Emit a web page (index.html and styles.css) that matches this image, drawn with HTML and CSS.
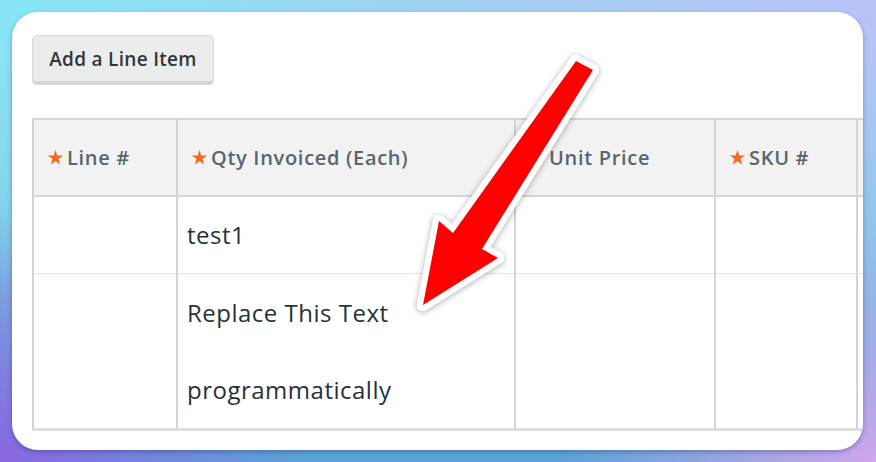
FILE: index.html
```html
<!DOCTYPE html>
<html>
<head>
<meta charset="utf-8">
<link rel="stylesheet" href="styles.css">
</head>
<body>
<div class="card">
  <button class="btn">Add a Line Item</button>
  <div class="table-wrap">
    <table class="grid">
      <colgroup>
        <col class="c1"><col class="c2"><col class="c3"><col class="c4"><col class="c5">
      </colgroup>
      <thead>
        <tr>
          <th><span class="star"><svg viewBox="0 0 24 24" width="17" height="17"><polygon points="12,1.5 14.6,9.2 22.8,9.3 16.2,14.1 18.7,21.9 12,17.2 5.3,21.9 7.8,14.1 1.2,9.3 9.4,9.2" fill="#f26a26"/></svg></span>Line #</th>
          <th><span class="star"><svg viewBox="0 0 24 24" width="17" height="17"><polygon points="12,1.5 14.6,9.2 22.8,9.3 16.2,14.1 18.7,21.9 12,17.2 5.3,21.9 7.8,14.1 1.2,9.3 9.4,9.2" fill="#f26a26"/></svg></span>Qty Invoiced (Each)</th>
          <th><span class="star"></span>Unit Price</th>
          <th><span class="star"><svg viewBox="0 0 24 24" width="17" height="17"><polygon points="12,1.5 14.6,9.2 22.8,9.3 16.2,14.1 18.7,21.9 12,17.2 5.3,21.9 7.8,14.1 1.2,9.3 9.4,9.2" fill="#f26a26"/></svg></span>SKU #</th>
          <th></th>
        </tr>
      </thead>
      <tbody>
        <tr class="r1">
          <td></td>
          <td>test1</td>
          <td></td>
          <td></td>
          <td></td>
        </tr>
        <tr class="r2">
          <td></td>
          <td><div class="line">Replace This Text</div><div class="line">programmatically</div></td>
          <td></td>
          <td></td>
          <td></td>
        </tr>
      </tbody>
    </table>
  </div>
</div>
<svg class="arrow" width="876" height="462" viewBox="0 0 876 462">
  <defs>
    <filter id="sh" x="-20%" y="-20%" width="140%" height="140%">
      <feDropShadow dx="0" dy="1" stdDeviation="3" flood-color="#000" flood-opacity="0.35"/>
    </filter>
  </defs>
  <polygon filter="url(#sh)" points="576,61 593,70 482,249 498,258 423,305 439,221 453,233" fill="#ff0000" stroke="#ffffff" stroke-width="12" stroke-linejoin="round" paint-order="stroke"/>
</svg>
</body>
</html>
```

FILE: styles.css
```css
html, body {
  margin: 0;
  padding: 0;
}
body {
  width: 876px;
  height: 462px;
  overflow: hidden;
  box-sizing: border-box;
  padding: 12px 13px 12px 12px;
  position: relative;
  background:
    radial-gradient(ellipse 420px 300px at 0% 0%, #86e6f6 0%, rgba(134,230,246,0) 100%),
    radial-gradient(ellipse 500px 300px at 100% 0%, #b9c2f7 0%, rgba(185,194,247,0) 100%),
    radial-gradient(ellipse 300px 260px at 0% 100%, #8b67e2 0%, rgba(139,103,226,0) 100%),
    radial-gradient(ellipse 320px 260px at 100% 100%, #cfa6ef 0%, rgba(207,166,239,0) 100%),
    linear-gradient(180deg, #9fd4f2 0%, #7ec8e6 50%, #5aa3d6 100%);
  font-family: "Open Sans", "Noto Sans", sans-serif;
}
.card {
  height: 100%;
  background: #ffffff;
  border-radius: 26px;
  box-shadow: 0 2px 5px rgba(30, 40, 90, 0.35);
  overflow: hidden;
  padding: 23px 0 0 20px;
  box-sizing: border-box;
}
.btn {
  display: block;
  width: 182px;
  height: 50px;
  background: #ebecec;
  border: 1px solid #d6d8d8;
  border-bottom: 4px solid #d3d5d6;
  border-radius: 5px;
  font-family: "Open Sans", "Noto Sans", sans-serif;
  font-weight: 600;
  font-size: 19px;
  letter-spacing: 0.3px;
  color: #333638;
  padding: 0;
  margin: 0 0 33px 0;
}
.table-wrap {
  width: 1000px;
}
.grid {
  border-collapse: collapse;
  table-layout: fixed;
  width: 1024px;
  border-top: 2px solid #d6d6d6;
  border-left: 2px solid #d2d2d2;
  border-bottom: 3px solid #dcdfdf;
}
.c1 { width: 144px; }
.c2 { width: 338px; }
.c3 { width: 200px; }
.c4 { width: 142px; }
.c5 { width: 200px; }
.grid th {
  background: #f2f2f2;
  height: 75px;
  padding: 0 14px;
  text-align: left;
  font-weight: 600;
  font-size: 20px;
  letter-spacing: 0.7px;
  color: #5b656c;
  border-right: 2px solid #d4d4d4;
  border-bottom: 2px solid #d6d6d6;
  white-space: nowrap;
}
.star {
  display: inline-block;
  width: 19px;
  vertical-align: -1px;
}
.star svg {
  display: block;
  margin-left: -1px;
}
.grid td {
  padding: 0 9px;
  font-size: 24px;
  letter-spacing: 0.5px;
  color: #283138;
  line-height: 76px;
  border-right: 2px solid #d4d4d4;
  border-bottom: 1px solid #e3e3e3;
  vertical-align: top;
}
.r2 .line {
  line-height: 77px;
}
.arrow {
  position: absolute;
  left: 0;
  top: 0;
  pointer-events: none;
}
```
